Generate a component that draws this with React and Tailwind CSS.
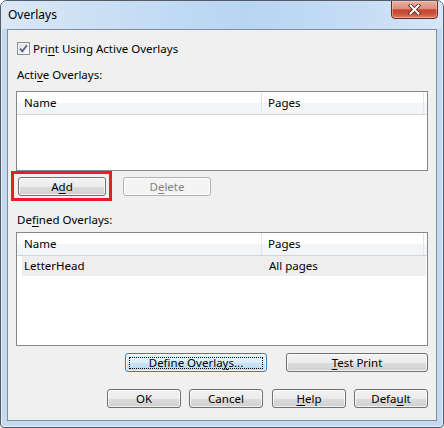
import React from "react";

function U({ children }) {
  return <span className="underline decoration-1 underline-offset-[2px]">{children}</span>;
}

function Btn({ children, className = "", disabled = false, focused = false }) {
  let skin =
    "border-[#707070] bg-[linear-gradient(#f2f2f2_0%,#ebebeb_50%,#dddddd_50%,#cfcfcf_100%)] text-black";
  if (disabled)
    skin = "border-[#adb2b5] bg-[#f4f4f4] text-[#838383]";
  if (focused)
    skin =
      "border-[#3c7fb1] bg-[linear-gradient(#e9f4fc_0%,#dcedf9_50%,#c8e4f6_50%,#bcdcf2_100%)] text-black";
  return (
    <div
      className={`relative flex items-center justify-center h-[19px] rounded-[3px] border shadow-[inset_0_0_0_1px_rgba(255,255,255,0.75)] leading-[16px] ${skin} ${className}`}
    >
      {focused && (
        <div className="absolute left-[3px] right-[3px] top-[3px] bottom-[2px] border border-dotted border-black"></div>
      )}
      <span className="relative">{children}</span>
    </div>
  );
}

function ListView({ height, rows = [] }) {
  return (
    <div className={`border border-[#828790] bg-white flex flex-col ${height}`}>
      <div className="flex h-[23px] border-b border-[#d5d5d5] bg-[linear-gradient(#ffffff_0%,#ffffff_50%,#f4f5f7_50%,#f4f5f7_100%)]">
        <div className="w-[245px] pl-[7px] flex items-center border-r border-[#e3e5e8]">Name</div>
        <div className="w-[162px] pl-[6px] flex items-center border-r border-[#e3e5e8]">Pages</div>
      </div>
      {rows.map((r) => (
        <div key={r[0]} className="flex h-[20px] ml-[5px] mr-[1px] bg-[#eeeeee] items-center">
          <div className="w-[240px] pl-[2px]">{r[0]}</div>
          <div className="pl-[7px]">{r[1]}</div>
        </div>
      ))}
    </div>
  );
}

export default function App() {
  return (
    <div className="w-[444px] h-[428px] font-['Noto_Sans','DejaVu_Sans',sans-serif] text-[11.5px] text-black">
      <div className="w-[444px] h-[428px] flex flex-col rounded-t-[7px] rounded-b-[4px] border border-[#545c66] bg-[#c4daf1] shadow-[inset_0_0_0_1px_rgba(255,255,255,0.55)] overflow-hidden">
        {/* title bar */}
        <div className="h-[28px] flex items-start justify-between bg-[linear-gradient(90deg,#dae8f6_0%,#c6ddf4_30%,#b8d5f3_55%,#c5dcf4_80%,#d6e6f7_100%)]">
          <div className="pl-[7px] pt-[6px] leading-[16px] text-[12px]">Overlays</div>
          <div className="mr-[5px] -mt-[1px] w-[47px] h-[19px] rounded-b-[4px] border border-[#6b2a20] bg-[linear-gradient(#eab0a2_0%,#dd8e7c_45%,#c64530_52%,#c9503b_75%,#e0806a_100%)] shadow-[inset_0_0_0_1px_rgba(255,220,210,0.45)] flex items-center justify-center">
            <svg width="13" height="11" viewBox="0 0 13 11">
              <path d="M2.5 1.5 L10.5 9.5 M10.5 1.5 L2.5 9.5" stroke="#4a1c15" strokeWidth="3.6" strokeLinecap="square" fill="none" />
              <path d="M2.5 1.5 L10.5 9.5 M10.5 1.5 L2.5 9.5" stroke="#ffffff" strokeWidth="2" strokeLinecap="square" fill="none" />
            </svg>
          </div>
        </div>
        {/* client area */}
        <div className="mx-[6px] mb-[6px] flex-1 border border-[#7d8da3] bg-[#f0f0f0] flex flex-col px-[8px]">
          {/* checkbox */}
          <div className="mt-[12px] h-[13px] ml-[1px] flex items-center">
            <div className="w-[13px] h-[13px] border border-[#8e8f8f] bg-[linear-gradient(135deg,#dcdcdc,#ffffff)] shadow-[inset_0_0_0_1px_#f4f4f4] flex items-center justify-center">
              <svg width="11" height="11" viewBox="0 0 11 11">
                <path d="M2 5.5 L4.3 8.3 L9 2.3" stroke="#4a5f8e" strokeWidth="1.7" fill="none" />
              </svg>
            </div>
            <span className="ml-[3px] leading-[16px]">
              Pri<U>n</U>t Using Active Overlays
            </span>
          </div>
          <div className="mt-[12px] ml-[1px] leading-[16px]">
            Acti<U>v</U>e Overlays:
          </div>
          <div className="mt-[8px]">
            <ListView height="h-[80px]" />
          </div>
          <div className="mt-[6px] flex">
            <div className="relative ml-[2px]">
              <Btn className="w-[88px]">
                A<U>d</U>d
              </Btn>
              <div className="absolute -left-[7px] -top-[6px] -right-[6px] -bottom-[5px] border-[3px] border-[#ed1c24]"></div>
            </div>
            <Btn disabled className="ml-[17px] w-[88px]">
              D<U>e</U>lete
            </Btn>
          </div>
          <div className="mt-[16px] ml-[1px] leading-[16px]">
            De<U>f</U>ined Overlays:
          </div>
          <div className="mt-[4px]">
            <ListView height="h-[114px]" rows={[["LetterHead", "All pages"]]} />
          </div>
          <div className="mt-[7px] flex justify-end">
            <Btn focused className="w-[142px]">
              Define Overla<U>y</U>s...
            </Btn>
            <Btn className="ml-[19px] w-[142px]">
              <U>T</U>est Print
            </Btn>
          </div>
          <div className="mt-[17px] flex justify-end">
            <Btn className="w-[74px]">OK</Btn>
            <Btn className="ml-[8px] w-[74px]">Cancel</Btn>
            <Btn className="ml-[9px] w-[74px]">
              <U>H</U>elp
            </Btn>
            <Btn className="ml-[8px] w-[74px]">
              Defa<U>u</U>lt
            </Btn>
          </div>
        </div>
      </div>
    </div>
  );
}
